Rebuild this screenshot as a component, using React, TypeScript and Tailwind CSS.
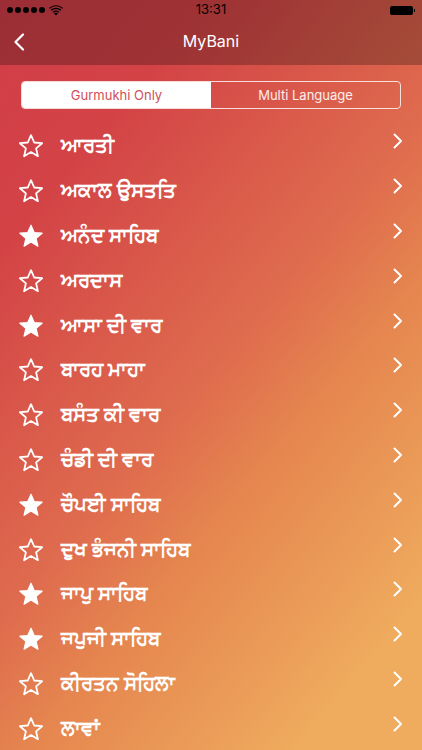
const banis = [
  { name: "ਆਰਤੀ", fav: false },
  { name: "ਅਕਾਲ ਉਸਤਤਿ", fav: false },
  { name: "ਅਨੰਦ ਸਾਹਿਬ", fav: true },
  { name: "ਅਰਦਾਸ", fav: false },
  { name: "ਆਸਾ ਦੀ ਵਾਰ", fav: true },
  { name: "ਬਾਰਹ ਮਾਹਾ", fav: false },
  { name: "ਬਸੰਤ ਕੀ ਵਾਰ", fav: false },
  { name: "ਚੰਡੀ ਦੀ ਵਾਰ", fav: false },
  { name: "ਚੌਪਈ ਸਾਹਿਬ", fav: true },
  { name: "ਦੁਖ ਭੰਜਨੀ ਸਾਹਿਬ", fav: false },
  { name: "ਜਾਪੁ ਸਾਹਿਬ", fav: true },
  { name: "ਜਪੁਜੀ ਸਾਹਿਬ", fav: true },
  { name: "ਕੀਰਤਨ ਸੋਹਿਲਾ", fav: false },
  { name: "ਲਾਵਾਂ", fav: false },
];

const Star = ({ filled }: { filled: boolean }) => (
  <svg width="26" height="26" viewBox="0 0 26 26" className="shrink-0">
    <path
      d="M13 2.2l3.2 7.3 7.9.7-6 5.2 1.8 7.8-6.9-4.1-6.9 4.1 1.8-7.8-6-5.2 7.9-.7z"
      fill={filled ? "#fff" : "none"}
      stroke="#fff"
      strokeWidth={filled ? 1.2 : 1.8}
      strokeLinejoin="round"
    />
  </svg>
);

const Chevron = () => (
  <svg width="12" height="18" viewBox="0 0 12 18" className="shrink-0 -translate-y-[5px]">
    <path d="M2.5 2.5L9 9l-6.5 6.5" fill="none" stroke="#fff" strokeWidth="2" strokeLinecap="round" strokeLinejoin="round" />
  </svg>
);

const StatusBar = () => (
  <div className="relative flex h-[20px] items-center justify-between pl-[7px] pr-[7px] text-black">
    <div className="flex items-center gap-[2px]">
      {[0, 1, 2, 3, 4].map((i) => (
        <span key={i} className="h-[6px] w-[6px] rounded-full bg-black" />
      ))}
      <svg width="14" height="11" viewBox="0 0 14 11" className="ml-[2px]">
        <path d="M7 10.5L5 8.3a3 3 0 0 1 4 0zM3.6 6.8a5 5 0 0 1 6.8 0l-.8.9a3.8 3.8 0 0 0-5.2 0zM1.7 4.8a7.8 7.8 0 0 1 10.6 0l-.8.9a6.6 6.6 0 0 0-9 0zM0 2.9a10.3 10.3 0 0 1 14 0l-.8.9a9.1 9.1 0 0 0-12.4 0z" fill="#000" />
      </svg>
    </div>
    <span className="absolute left-0 right-0 text-center text-[13px]">13:31</span>
    <div className="flex items-center">
      <span className="h-[9px] w-[23px] rounded-[2px] bg-black" />
      <span className="ml-[1px] h-[3px] w-[1px] bg-black" />
    </div>
  </div>
);

export default function App() {
  return (
    <div
      className="h-[750px] w-[422px] overflow-hidden bg-[linear-gradient(130deg,#d13d48_0%,#d34346_20%,#df6c4e_50%,#e5854f_62%,#efab5e_88%)] text-white"
      style={{ fontFamily: 'Inter, "Noto Sans", "Liberation Sans", sans-serif' }}
    >
      <div className="h-[65px] bg-black/25">
        <StatusBar />
        <div className="relative flex h-[42px] items-center justify-center">
          <svg width="12" height="18" viewBox="0 0 12 18" className="absolute left-[13px] top-[13px]">
            <path d="M10 1.5L2.5 9l7.5 7.5" fill="none" stroke="#fff" strokeWidth="2.2" strokeLinecap="round" strokeLinejoin="round" />
          </svg>
          <span className="text-[16px]">MyBani</span>
        </div>
      </div>

      <div className="mx-[21px] mt-[16px] flex h-[28px] overflow-hidden rounded-[4px] border border-white/80 text-[13px]">
        <div className="flex flex-1 items-center justify-center bg-white pt-[1px] text-[#cf4f58]">Gurmukhi Only</div>
        <div className="flex flex-1 items-center justify-center pt-[1px] text-white/90">Multi Language</div>
      </div>

      <ul className="mt-[15px] flex flex-col">
        {banis.map((b) => (
          <li key={b.name} className="flex h-[44.8px] items-center pl-[18px] pr-[18px]">
            <Star filled={b.fav} />
            <span className="ml-[17px] flex-1 -translate-y-[1px] text-[20px] font-semibold">{b.name}</span>
            <Chevron />
          </li>
        ))}
      </ul>
    </div>
  );
}
